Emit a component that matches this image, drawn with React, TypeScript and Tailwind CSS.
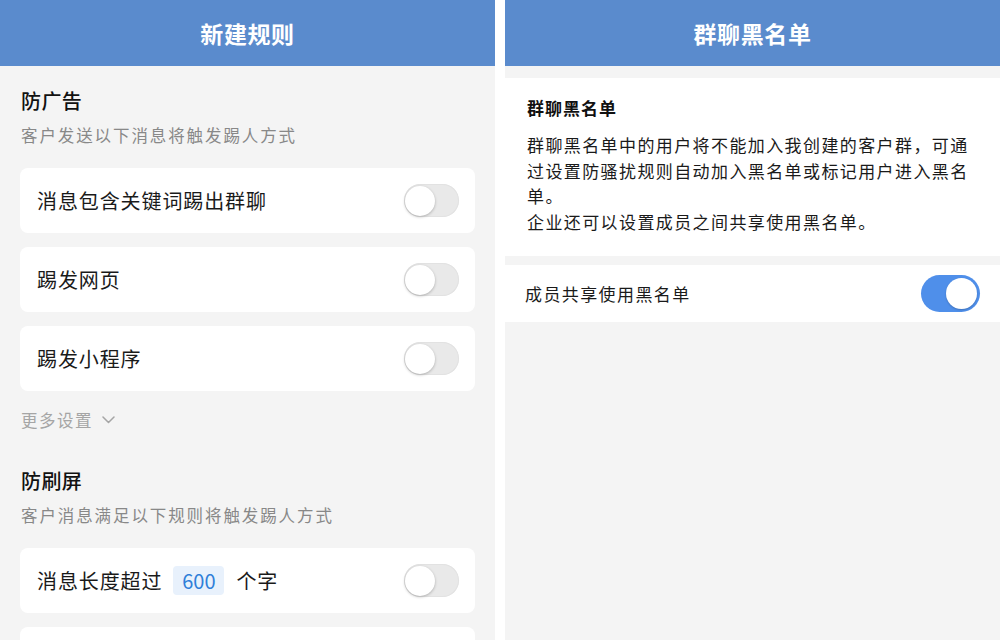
import React from "react";

const FONT = { fontFamily: '"Noto Sans CJK SC", "Noto Sans", sans-serif' };

function ToggleOff() {
  return (
    <div className="relative h-[33px] w-[55px] shrink-0 rounded-full bg-[#e9e9e9] shadow-[inset_0_0_0_1px_#e2e2e2]">
      <div className="absolute left-[1px] top-[1.5px] h-[30px] w-[30px] rounded-full bg-white shadow-[0_1px_3px_rgba(0,0,0,0.25)]" />
    </div>
  );
}

function ToggleOn() {
  return (
    <div className="relative h-[37px] w-[59px] shrink-0 rounded-full bg-[#4f8fea]">
      <div className="absolute right-[3px] top-[3px] h-[31px] w-[31px] rounded-full bg-white shadow-[0_1px_2px_rgba(0,0,0,0.2)]" />
    </div>
  );
}

function Card({ children }: { children?: React.ReactNode }) {
  return (
    <div className="flex h-[65px] shrink-0 items-center justify-between rounded-[8px] bg-white pl-[17px] pr-[16px]">
      {children}
    </div>
  );
}

function CardText({ children }: { children: React.ReactNode }) {
  return <span className="text-[20px] tracking-[0.9px] text-[#1a1a1a]">{children}</span>;
}

export default function App() {
  return (
    <div className="flex h-[640px] w-[1000px] overflow-hidden bg-white" style={FONT}>
      {/* Left panel */}
      <div className="flex w-[495px] shrink-0 flex-col overflow-hidden bg-[#f4f4f4]">
        <div className="flex h-[66px] shrink-0 items-center justify-center bg-[#5a8bcd]">
          <span className="text-[23px] font-semibold tracking-[0.6px] text-white">新建规则</span>
        </div>
        <div className="flex flex-col px-[20px]">
          <div className="mt-[20px] flex h-[30px] items-center pl-[1px]">
            <span className="text-[20px] font-medium tracking-[0.4px] text-[#111]">防广告</span>
          </div>
          <div className="flex h-[38px] items-center pl-[1px]">
            <span className="text-[16.5px] tracking-[1.9px] text-[#888]">客户发送以下消息将触发踢人方式</span>
          </div>
          <div className="mt-[14px] flex flex-col gap-[14px]">
            <Card>
              <CardText>消息包含关键词踢出群聊</CardText>
              <ToggleOff />
            </Card>
            <Card>
              <CardText>踢发网页</CardText>
              <ToggleOff />
            </Card>
            <Card>
              <CardText>踢发小程序</CardText>
              <ToggleOff />
            </Card>
          </div>
          <div className="mt-[14px] flex h-[30px] items-center gap-[9px] pl-[1px]">
            <span className="text-[16.5px] tracking-[1.5px] text-[#a5a5a5]">更多设置</span>
            <svg width="13" height="8" viewBox="0 0 13 8" fill="none">
              <path d="M1 1l5.5 5.5L12 1" stroke="#a5a5a5" strokeWidth="1.5" strokeLinecap="round" strokeLinejoin="round" />
            </svg>
          </div>
          <div className="mt-[31px] flex h-[30px] items-center pl-[1px]">
            <span className="text-[20px] font-medium tracking-[0.4px] text-[#111]">防刷屏</span>
          </div>
          <div className="flex h-[38px] items-center pl-[1px]">
            <span className="text-[16.5px] tracking-[1.9px] text-[#888]">客户消息满足以下规则将触发踢人方式</span>
          </div>
          <div className="mt-[14px] flex flex-col gap-[14px]">
            <Card>
              <div className="flex items-center">
                <CardText>消息长度超过</CardText>
                <span className="ml-[11px] flex h-[29px] w-[51px] items-center justify-center rounded-[4px] bg-[#e8f1fc] text-[20px] text-[#2f7fd9]">
                  600
                </span>
                <span className="ml-[12px]">
                  <CardText>个字</CardText>
                </span>
              </div>
              <ToggleOff />
            </Card>
            <Card />
          </div>
        </div>
      </div>

      {/* Gap */}
      <div className="w-[10px] shrink-0 bg-white" />

      {/* Right panel */}
      <div className="flex flex-1 flex-col bg-[#f4f4f4]">
        <div className="flex h-[66px] shrink-0 items-center justify-center bg-[#5a8bcd]">
          <span className="text-[23px] font-semibold tracking-[0.6px] text-white">群聊黑名单</span>
        </div>
        <div className="mt-[12px] flex h-[178px] flex-col bg-white px-[22px] pt-[18px]">
          <div className="flex h-[24px] items-center">
            <span className="text-[17px] font-semibold tracking-[1px] text-[#111]">群聊黑名单</span>
          </div>
          <p className="mt-[12px] w-[448px] text-[17px] leading-[25.6px] tracking-[1.4px] text-[#1a1a1a]">
            群聊黑名单中的用户将不能加入我创建的客户群，可通过设置防骚扰规则自动加入黑名单或标记用户进入黑名单。
            <br />
            企业还可以设置成员之间共享使用黑名单。
          </p>
        </div>
        <div className="mt-[9px] flex h-[57px] items-center justify-between bg-white pl-[20px] pr-[20px]">
          <span className="text-[17px] tracking-[1.4px] text-[#1a1a1a]">成员共享使用黑名单</span>
          <ToggleOn />
        </div>
      </div>
    </div>
  );
}
